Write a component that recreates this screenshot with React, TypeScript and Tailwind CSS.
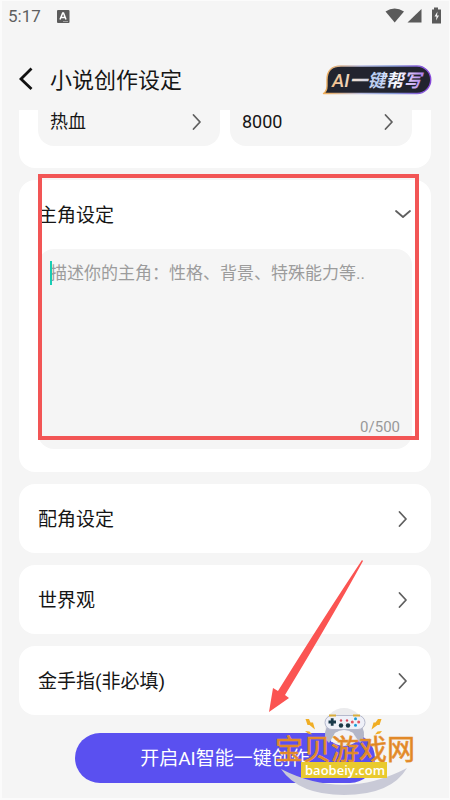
import { useState } from "react";

function Chevron({ down = false }: { down?: boolean }) {
  return (
    <svg width="18" height="18" viewBox="0 0 18 18" fill="none" stroke="#5f5f5f" strokeWidth="1.8" strokeLinecap="round" strokeLinejoin="round" aria-hidden="true">
      {down ? <path d="M2 5l7 6 7-6" /> : <path d="M5.500 2l6.500 7-6.500 7" />}
    </svg>
  );
}

function StatusBar() {
  return (
    <div className="flex h-8 items-center justify-between px-2 text-[#5f5f5f]">
      <div className="flex items-center gap-4">
        <span className="text-[17px] leading-5">5:17</span>
        <svg width="13" height="13" viewBox="0 0 13 13" aria-hidden="true">
          <rect width="12.500" height="13" rx="1" fill="#5c5c5c" />
          <path d="M3 9.500L5.700 3h.8L9 9.500M4.200 7.500h3.700" stroke="#fff" strokeWidth="1.500" fill="none" />
          <path d="M6 11.500h5" stroke="#bbb" strokeWidth=".7" />
        </svg>
      </div>
      <svg width="58" height="18" viewBox="0 0 58 18" fill="#5a5a5a" aria-hidden="true">
        <path d="M1.500 4.500Q10.500 -1.500 20 4.500L10.700 15.500z" />
        <path d="M37.500 2v13.500h-14z" />
        <path d="M50 .5h4v2h3v14H48v-14h2z" />
        <path d="M53.500 4.500l-3 5h2l-.5 4 3-5h-2z" fill="#f5f5f5" />
      </svg>
    </div>
  );
}

function AiBadge() {
  return (
    <button type="button" aria-label="AI一键帮写" className="h-8 w-[110px]">
      <svg width="110" height="32" viewBox="0 0 110 32">
        <defs>
          <linearGradient id="edge">
            <stop offset="0" stopColor="#f1ad55" />
            <stop offset=".35" stopColor="#b9bde0" />
            <stop offset=".65" stopColor="#879bd8" />
            <stop offset="1" stopColor="#8546d8" />
          </linearGradient>
          <linearGradient id="label">
            <stop offset="0" stopColor="#f3bd84" />
            <stop offset=".25" stopColor="#f0dfd4" />
            <stop offset=".5" stopColor="#b5cdf8" />
            <stop offset=".72" stopColor="#ffffff" />
            <stop offset="1" stopColor="#a978ed" />
          </linearGradient>
        </defs>
        <path d="M1.500 29.500Q5 27 5 22v-6Q5 2 19 2h76a13.700 13.700 0 0 1 0 27.500z" fill="#22242f" stroke="url(#edge)" strokeWidth="1.400" strokeLinejoin="round" />
        <text x="10" y="23" fontSize="18" fontStyle="italic" fontWeight="700" fill="url(#label)" fontFamily="Roboto, 'Noto Sans CJK SC', sans-serif">
          <tspan fontSize="19" fontWeight="500">AI</tspan>一键帮写
        </text>
      </svg>
    </button>
  );
}

function PickerButton({ value }: { value: string }) {
  return (
    <button type="button" className="flex h-9 flex-1 items-start justify-between rounded-b-2xl bg-[#f5f5f5] pl-3 pr-3.5 text-[18px] leading-6">
      <span>{value}</span>
      <span className="flex h-6 items-center"><Chevron /></span>
    </button>
  );
}

function SettingRow({ title }: { title: string }) {
  return (
    <button type="button" className="flex h-[69px] w-full items-center justify-between rounded-2xl bg-white px-[19px] text-[19px] leading-7">
      <span className="pt-0.5">{title}</span>
      <Chevron />
    </button>
  );
}

function CharacterCard() {
  const [text, setText] = useState("");
  return (
    <section className="relative rounded-2xl bg-white px-[19px] pb-[23px] pt-5">
      <button type="button" aria-expanded="true" className="flex h-[30px] w-full items-center justify-between text-[19px] leading-7">
        <span id="hero-title" className="pt-0.5">主角设定</span>
        <Chevron down />
      </button>
      <div className="relative mt-[19px] flex h-[200px] flex-col rounded-2xl bg-[#f5f5f5] px-3 py-3">
        <textarea
          aria-labelledby="hero-title"
          value={text}
          maxLength={500}
          onChange={(e) => setText(e.target.value)}
          placeholder="描述你的主角：性格、背景、特殊能力等.."
          className="w-full flex-1 resize-none bg-transparent text-[17px] leading-6 outline-none placeholder:text-[#9c9c9c]"
        />
        <span className="absolute left-3 top-3 h-6 w-[2px] bg-[#18cdb4]" />
        <span className="text-right text-[15px] leading-5 text-[#999]">{text.length}/500</span>
      </div>
      <div className="pointer-events-none absolute -top-1.5 bottom-8 left-[19px] right-3 border-4 border-[#f25555]" />
    </section>
  );
}

function PointerArrow() {
  return (
    <svg className="pointer-events-none absolute bottom-[87px] right-[86px]" width="96" height="154" viewBox="0 0 96 154" aria-hidden="true">
      <path d="M94 1L95 2Q62 62 17 136l4 3-20 14 4-24 5 3Q56 58 94 1z" fill="#fb5452" />
    </svg>
  );
}

function Watermark() {
  return (
    <svg className="pointer-events-none absolute bottom-[2px] right-[30px]" width="150" height="98" viewBox="0 0 150 98" role="img" aria-label="宝贝游戏网 baobeiy.com">
      <circle cx="74" cy="27" r="19" fill="#ebebed" />
      <path d="M11 69Q74 101 137 68Q121 95 74 95Q29 95 11 69z" fill="#c9cad7" />
      <path d="M57 26Q52 38 59 43L65 33Q74 28 83 33L90 43Q97 38 92 26z" fill="#b3b6c8" />
      <path d="M65 33Q74 27 83 33L87 42H61z" fill="#f3f3f6" />
      <rect x="55" y="15.500" width="40" height="14" rx="7" fill="#eef0f8" stroke="#b5b9cc" />
      <path d="M59 15.500h7M83 15.500h7" stroke="#d9ad3c" strokeWidth="2" />
      <path d="M58.500 22h7.500M62.200 18.200v7.600" stroke="#18394a" strokeWidth="2.800" />
      <circle cx="71" cy="25.500" r="2.200" fill="#193847" />
      <circle cx="78" cy="25.500" r="2.200" fill="#193847" />
      <circle cx="71" cy="20.500" r="1.200" fill="#d84a5c" />
      <circle cx="77" cy="20.500" r="1.200" fill="#d84a5c" />
      <circle cx="85.500" cy="18.800" r="1.500" fill="#1a9bd7" />
      <circle cx="82.300" cy="22" r="1.500" fill="#e25661" />
      <circle cx="88.700" cy="22" r="1.500" fill="#e25661" />
      <circle cx="85.500" cy="25.200" r="1.500" fill="#1a9bd7" />
      <g fill="#f0ae25">
        <path d="M35.500 19l3.500 0 1.500 3.500 2.500 0 2 7-5.500-4.500-2 0z" />
        <path d="M111.500 19l-3.500 0-2.500 3.500-2 0-2 7 6-4.500 2 0z" />
        <path d="M35 31l4.500 .5 2.500 3-4-1z" />
        <path d="M112 31l-4.500 .5-2.500 3 5-1z" />
      </g>
      <text x="5" y="60" fontSize="28" fill="#df8523" stroke="#e8953a" strokeWidth=".7" fontFamily="'Noto Sans CJK SC', sans-serif">宝贝游戏网</text>
      <rect x="31" y="62" width="86" height="16" fill="#e9ca2e" />
      <text x="35" y="75" fontSize="13" fontWeight="600" fill="#fff" fontFamily="'Open Sans', 'Noto Sans', sans-serif">baobeiy.com</text>
    </svg>
  );
}

export default function App() {
  return (
    <div className="relative w-full bg-[#f5f5f5] pb-[17px] font-[Roboto,'Noto_Sans_CJK_SC',sans-serif] text-[#161616] shadow-[inset_2px_1px_#fbfbfb,inset_-1px_-2px_#fbfbfb]">
      <StatusBar />
      <header className="flex h-[78px] items-end justify-between px-[18px] pb-3.5">
        <div className="flex h-8 items-center gap-4">
          <button type="button" aria-label="返回">
            <svg width="16" height="26" viewBox="0 0 16 26" fill="none" stroke="#111" strokeWidth="2.800"><path d="M13.500 1.500L3 12l10.500 10" /></svg>
          </button>
          <h1 className="pt-0.5 text-[22px] leading-8">小说创作设定</h1>
        </div>
        <AiBadge />
      </header>
      <main className="flex flex-col gap-3 px-[19px]">
        <section className="flex gap-2.5 rounded-b-2xl bg-white px-[19px] pb-[22px]">
          <PickerButton value="热血" />
          <PickerButton value="8000" />
        </section>
        <CharacterCard />
        <SettingRow title="配角设定" />
        <SettingRow title="世界观" />
        <SettingRow title="金手指(非必填)" />
      </main>
      <div className="mt-[18px] flex justify-center">
        <button type="button" className="h-[50px] w-2/3 rounded-full bg-[#5a50f0] pt-0.5 text-[19px] text-white">开启AI智能一键创作</button>
      </div>
      <PointerArrow />
      <Watermark />
    </div>
  );
}
